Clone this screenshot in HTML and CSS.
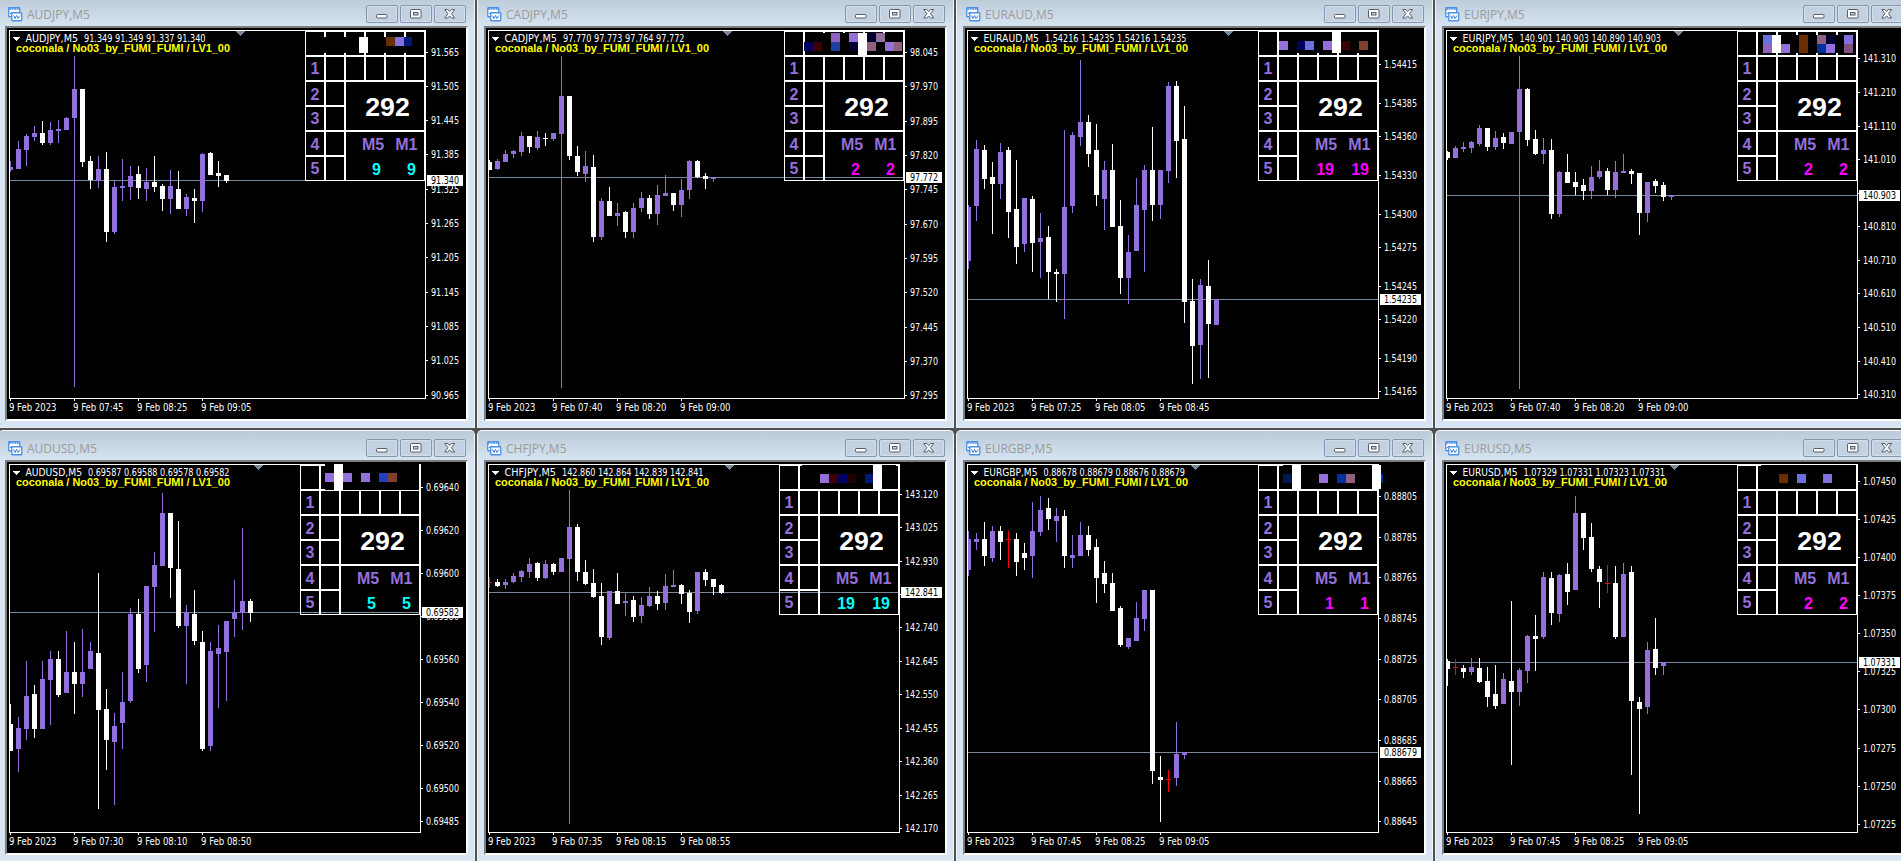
FILE: index.html
```html
<!DOCTYPE html>
<html lang="en">
<head>
  <meta charset="UTF-8">
  <meta name="viewport" content="width=device-width, initial-scale=1.0">
  <title>Charts</title>
  <link rel="stylesheet" href="styles.css">
</head>
<body>
  <main class="workspace" id="workspace"></main>

  <template id="windowTemplate">
    <section class="window">
      <header class="titlebar">
        <svg class="app-icon" width="15" height="15" viewBox="0 0 15 15">
          <rect x="0.75" y="0.75" width="11" height="9" rx="0.5" fill="#fff" stroke="#4a90e8" stroke-width="1.3"/>
          <path d="M1 2h11" stroke="#4a90e8" stroke-width="1.6" stroke-dasharray="2 0.6"/>
          <path d="M2 7l2-2 1 2" fill="none" stroke="#3a7be0"/>
          <rect x="3.75" y="5.75" width="10" height="8" rx="0.5" fill="#fff" stroke="#4a90e8" stroke-width="1.3"/>
          <path d="M5.5 8.5l1.5 3 1.5-3 1.5 3 2-3" fill="none" stroke="#3a7be0"/>
        </svg>
        <span class="title"></span>
        <div class="buttons">
          <span class="btn">
            <svg width="12" height="10" viewBox="0 0 12 10"><rect x="0.5" y="5.5" width="10.5" height="3.5" rx="1" fill="#fdfdfd" stroke="#565d6b"/></svg>
          </span>
          <span class="btn">
            <svg width="12" height="10" viewBox="0 0 12 10"><rect x="0.5" y="0.5" width="10.5" height="8.5" rx="1" fill="#fdfdfd" stroke="#565d6b"/><rect x="3.5" y="3.5" width="4.5" height="2.5" fill="#c3cfdd" stroke="#565d6b"/></svg>
          </span>
          <span class="btn">
            <svg width="12" height="10" viewBox="0 0 12 10"><path d="M0.8 0.5h3L5.7 2.6 7.6 0.5h3L7.5 4.7 10.6 9h-3L5.7 6.9 3.8 9h-3L3.9 4.7z" fill="#fdfdfd" stroke="#565d6b" stroke-linejoin="round"/></svg>
          </span>
        </div>
      </header>
      <div class="client">
        <svg class="chart" width="459" height="391" viewBox="7 28 459 391"></svg>
        <div class="panel">
          <i class="cell"></i><i class="cell"></i><i class="cell"></i><i class="cell"></i><i class="cell"></i><i class="cell"></i>
          <b class="cell">1</b><i class="cell"></i><i class="cell"></i><i class="cell"></i><i class="cell"></i><i class="cell"></i>
          <b class="cell low">2</b><i class="cell"></i>
          <div class="cell total">292</div>
          <b class="cell">3</b><i class="cell"></i>
          <b class="cell low">4</b><i class="cell"></i>
          <div class="cell frames">
            <div class="names"><span>M5</span><span>M1</span></div>
            <div class="values"><span></span><span></span></div>
          </div>
          <b class="cell">5</b><i class="cell"></i>
        </div>
        <svg class="strip" width="459" height="391" viewBox="7 28 459 391"></svg>
      </div>
    </section>
  </template>

  <script src="script.js"></script>
</body>
</html>
```
FILE: styles.css
```css
* {
  margin: 0;
  padding: 0;
  box-sizing: border-box;
}

body {
  height: 100vh;
  background: #505050;
  overflow: hidden;
  font-family: "Liberation Sans", Arial, sans-serif;
}

/* Tiled chart windows, the outer edges run off the screen */
.workspace {
  display: grid;
  grid-template-columns: repeat(4, 477px);
  grid-template-rows: 432px 431px;
  gap: 2px;
  width: 1903px;
  height: 865px;
  margin: -4px 0 0 -2px;
  overflow: hidden;
}

.window {
  padding: 0 6px;
  border: 1px solid #f3f7fb;
  border-bottom-color: #e4ebf3;
  border-radius: 5px 5px 0 0;
  background: linear-gradient(#bccad8, #d7e4f1 30px);
}

/* Title bar */
.titlebar {
  display: flex;
  align-items: flex-start;
  height: 29px;
  padding: 8px 0 0 3px;
}

.app-icon {
  margin-top: 2px;
}

.title {
  margin: 1px 0 0 4px;
  font: 12px/17px "Open Sans", "Noto Sans", sans-serif;
  color: #9b9b9b;
}

.buttons {
  display: flex;
  gap: 2px;
  margin-left: auto;
  padding-right: 2px;
}

.btn {
  display: flex;
  justify-content: center;
  align-items: center;
  width: 32px;
  height: 18px;
  border: 1px solid #8696b0;
  border-radius: 2px;
  box-shadow: inset 0 0 0 1px #d3deeb;
  background: #c3d1e0;
}

/* Chart area */
.client {
  position: relative;
  width: 463px;
  height: 395px;
  border: 2px solid;
  border-color: #7d7d7d #fff #fff #7d7d7d;
  background: #000;
}

.chart,
.strip {
  display: block;
  shape-rendering: crispEdges;
}

.strip {
  position: absolute;
  top: 0;
  left: 0;
}

.chart text {
  font-family: "DejaVu Sans Condensed", "DejaVu Sans", sans-serif;
  font-size: 9.6px;
  fill: #fff;
}

.chart .dark {
  fill: #000;
}

.chart .signature {
  font: bold 11px "Liberation Sans", Arial, sans-serif;
  fill: #ff0;
}

.frame,
.tick {
  fill: #fff;
}

.price-line,
.shift {
  fill: #778899;
}

.up {
  fill: #9370db;
}

.down {
  fill: #fff;
}

.flat {
  fill: #f00;
}

/* Indicator table */
.panel {
  position: absolute;
  top: 3px;
  right: 41px;
  display: grid;
  grid-template-columns: repeat(6, 20px);
  grid-template-rows: repeat(6, 25px);
  color: #9370db;
  font-size: 16px;
  font-weight: bold;
}

.panel.wide {
  right: 46px;
}

.cell {
  border: 1px solid #fff;
  line-height: 23px;
  text-align: center;
}

.cell.low {
  line-height: 25px;
}

.total,
.frames {
  grid-column: span 4;
  grid-row: span 2;
}

.total {
  padding-left: 5px;
  font-size: 26.67px;
  line-height: 51px;
  color: #fff;
}

.names,
.values {
  display: flex;
  height: 25px;
  line-height: 25px;
}

.names {
  gap: 11px;
  padding-left: 16px;
}

.values span {
  width: 35px;
  text-align: right;
}

.values {
  color: #f0f;
}

.values.cyan {
  color: #0ff;
}
```
FILE: script.js
```js
// candle: [kind, high, body top, body bottom, low]
const charts = [
  {
    symbol: 'AUDJPY', ohlc: '91.349 91.349 91.337 91.340', nameWidth: 52.5, axis: 425, shift: 240,
    price: ['91.340', 180], value: 9, cyan: true,
    times: ['9 Feb 2023', '9 Feb 07:45', '9 Feb 08:25', '9 Feb 09:05'],
    scale: [['91.565', 52], ['91.505', 86], ['91.445', 120], ['91.385', 154], ['91.325', 189], ['91.265', 223], ['91.205', 257], ['91.145', 292], ['91.085', 326], ['91.025', 360], ['90.965', 395]],
    strip: [['#000', 306, 37, 118, 16], ['#fff', 359, 37, 9, 16], ['#6b2e00', 386, 37, 9, 9], ['#8470dc', 395, 37, 9, 9], ['#001878', 404, 37, 8, 9]],
    candles: [
      ['up', 161, 167, 170, 172], ['up', 141, 149, 169, 169], ['up', 134, 136, 150, 166], ['up', 126, 133, 137, 141],
      ['down', 121, 133, 143, 145], ['up', 122, 130, 143, 145], ['up', 120, 129, 131, 143], ['up', 117, 118, 130, 130],
      ['up', 56, 89, 118, 387], ['down', 89, 89, 162, 167], ['down', 156, 161, 180, 189], ['up', 156, 169, 181, 188],
      ['down', 152, 169, 232, 242], ['up', 181, 187, 232, 234], ['up', 159, 186, 188, 201], ['up', 166, 176, 187, 200],
      ['down', 166, 174, 188, 199], ['up', 168, 182, 189, 201], ['down', 156, 182, 187, 192], ['down', 184, 186, 199, 211],
      ['up', 170, 186, 199, 214], ['down', 171, 189, 209, 209], ['up', 194, 197, 209, 216], ['down', 189, 198, 201, 223],
      ['up', 153, 154, 201, 212], ['down', 152, 153, 175, 175], ['down', 161, 173, 176, 187], ['down', 175, 175, 181, 183]
    ]
  },
  {
    symbol: 'CADJPY', ohlc: '97.770 97.773 97.764 97.772', nameWidth: 52.5, axis: 425, shift: 248,
    price: ['97.772', 177], value: 2,
    times: ['9 Feb 2023', '9 Feb 07:40', '9 Feb 08:20', '9 Feb 09:00'],
    scale: [['98.045', 52], ['97.970', 86], ['97.895', 121], ['97.820', 155], ['97.745', 189], ['97.670', 224], ['97.595', 258], ['97.520', 292], ['97.445', 327], ['97.370', 361], ['97.295', 395]],
    strip: [['#000', 326, 33, 98, 22], ['#9060c0', 352, 33, 9, 9], ['#9370db', 370, 33, 9, 9], ['#000030', 388, 33, 9, 9], ['#90709c', 397, 33, 9, 9], ['#000060', 325, 42, 9, 9], ['#3c0000', 334, 42, 9, 9], ['#2040a0', 352, 42, 9, 9], ['#000030', 370, 42, 9, 9], ['#906080', 388, 42, 9, 9], ['#9370db', 406, 42, 9, 9], ['#906080', 415, 42, 8, 9], ['#fff', 379, 33, 9, 23]],
    candles: [
      ['down', 160, 162, 170, 170], ['up', 159, 161, 169, 170], ['up', 150, 154, 162, 162], ['up', 150, 151, 154, 158],
      ['up', 132, 136, 152, 156], ['down', 136, 136, 147, 153], ['up', 131, 137, 148, 150], ['down', 133, 138, 139, 146],
      ['up', 133, 133, 139, 141], ['up', 56, 96, 134, 388], ['down', 96, 96, 156, 160], ['down', 146, 156, 172, 176],
      ['up', 151, 166, 174, 182], ['down', 155, 167, 237, 242], ['up', 198, 201, 237, 240], ['down', 187, 201, 216, 216],
      ['up', 203, 213, 216, 226], ['down', 211, 212, 232, 238], ['up', 203, 208, 232, 238], ['up', 192, 198, 208, 212],
      ['down', 195, 198, 214, 219], ['up', 185, 195, 214, 225], ['up', 175, 193, 196, 196], ['down', 193, 193, 205, 211],
      ['up', 179, 190, 205, 217], ['up', 160, 161, 190, 199], ['down', 160, 161, 177, 178], ['down', 173, 176, 179, 189],
      ['up', 177, 177, 179, 182]
    ]
  },
  {
    symbol: 'EURAUD', ohlc: '1.54216 1.54235 1.54216 1.54235', nameWidth: 55.5, axis: 420, shift: 270,
    price: ['1.54235', 299], value: 19,
    times: ['9 Feb 2023', '9 Feb 07:25', '9 Feb 08:05', '9 Feb 08:45'],
    scale: [['1.54415', 64], ['1.54385', 103], ['1.54360', 136], ['1.54330', 175], ['1.54300', 214], ['1.54275', 247], ['1.54245', 286], ['1.54220', 319], ['1.54190', 358], ['1.54165', 391]],
    strip: [['#000', 321, 32, 98, 21], ['#9370db', 321, 41, 9, 9], ['#000060', 339, 41, 8, 9], ['#6a70dc', 347, 41, 9, 9], ['#9370db', 365, 41, 9, 9], ['#fff', 374, 32, 9, 21], ['#3c0000', 383, 41, 9, 9], ['#804030', 401, 41, 9, 9]],
    candles: [
      ['up', 205, 207, 261, 269], ['up', 140, 149, 206, 221], ['down', 145, 150, 179, 189], ['down', 162, 177, 184, 234],
      ['up', 143, 152, 184, 199], ['down', 147, 150, 212, 238], ['down', 160, 209, 247, 264], ['up', 198, 198, 244, 252],
      ['down', 196, 199, 243, 272], ['up', 213, 238, 242, 278], ['down', 226, 237, 272, 299], ['down', 269, 272, 274, 302],
      ['up', 130, 207, 274, 319], ['up', 132, 135, 206, 213], ['up', 60, 122, 137, 146], ['down', 115, 122, 154, 167],
      ['down', 124, 150, 195, 206], ['up', 161, 170, 199, 230], ['down', 144, 170, 227, 227], ['down', 200, 226, 278, 294],
      ['up', 235, 252, 278, 304], ['up', 178, 205, 251, 251], ['up', 165, 170, 210, 272], ['down', 127, 170, 205, 221],
      ['up', 170, 170, 205, 219], ['up', 82, 86, 171, 183], ['down', 81, 86, 141, 178], ['down', 106, 139, 302, 323],
      ['down', 279, 301, 346, 384], ['up', 279, 285, 345, 379], ['down', 260, 286, 324, 378], ['up', 299, 299, 325, 325]
    ]
  },
  {
    symbol: 'EURJPY', ohlc: '140.901 140.903 140.890 140.903', nameWidth: 51, axis: 420, shift: 241,
    price: ['140.903', 195], value: 2,
    times: ['9 Feb 2023', '9 Feb 07:40', '9 Feb 08:20', '9 Feb 09:00'],
    scale: [['141.310', 58], ['141.210', 92], ['141.110', 126], ['141.010', 159], ['', 193], ['140.810', 226], ['140.710', 260], ['140.610', 293], ['140.510', 327], ['140.410', 361], ['140.310', 394]],
    strip: [['#000', 326, 35, 90, 18], ['#6a70dc', 326, 35, 9, 9], ['#9060c0', 326, 44, 9, 9], ['#fff', 335, 35, 9, 18], ['#9370db', 344, 44, 9, 9], ['#6b2e00', 362, 35, 9, 18], ['#906080', 380, 35, 9, 9], ['#000030', 389, 35, 9, 9], ['#0030a0', 380, 44, 9, 9], ['#9370db', 389, 44, 9, 9], ['#8470dc', 407, 35, 9, 9], ['#805080', 407, 44, 9, 9]],
    candles: [
      ['down', 151, 152, 158, 160], ['up', 146, 148, 158, 158], ['up', 142, 147, 149, 152], ['up', 141, 142, 148, 153],
      ['up', 125, 128, 144, 146], ['down', 128, 128, 147, 151], ['up', 131, 138, 147, 150], ['down', 133, 137, 143, 149],
      ['up', 132, 132, 144, 144], ['up', 56, 89, 132, 389], ['down', 88, 89, 140, 146], ['down', 130, 139, 154, 155],
      ['up', 138, 150, 154, 164], ['down', 139, 150, 214, 219], ['up', 171, 172, 214, 217], ['down', 154, 172, 183, 183],
      ['down', 172, 182, 187, 195], ['down', 179, 185, 191, 200], ['up', 166, 177, 191, 199], ['up', 160, 171, 177, 179],
      ['down', 168, 171, 190, 195], ['up', 161, 172, 190, 198], ['up', 154, 171, 173, 173], ['down', 169, 171, 174, 184],
      ['down', 173, 173, 213, 235], ['up', 182, 182, 213, 222], ['down', 179, 181, 186, 193], ['down', 182, 185, 197, 201],
      ['up', 195, 195, 197, 200]
    ]
  },
  {
    symbol: 'AUDUSD', ohlc: '0.69587 0.69588 0.69578 0.69582', nameWidth: 56.5, axis: 420, shift: 258,
    price: ['0.69582', 178], value: 5, cyan: true,
    times: ['9 Feb 2023', '9 Feb 07:30', '9 Feb 08:10', '9 Feb 08:50'],
    scale: [['0.69640', 53], ['0.69620', 96], ['0.69600', 139], ['0.69580', 182], ['0.69560', 225], ['0.69540', 268], ['0.69520', 311], ['0.69500', 354], ['0.69485', 387]],
    strip: [['#000', 325, 30, 94, 26], ['#9370db', 325, 39, 9, 9], ['#fff', 334, 30, 9, 26], ['#9370db', 343, 39, 9, 9], ['#9370db', 361, 39, 9, 9], ['#2040c0', 379, 39, 9, 9], ['#804030', 388, 39, 9, 9]],
    candles: [
      ['down', 270, 290, 317, 317], ['up', 283, 294, 315, 338], ['up', 227, 262, 295, 306], ['down', 251, 260, 295, 304],
      ['up', 227, 245, 295, 295], ['up', 217, 225, 246, 291], ['down', 217, 225, 261, 263], ['up', 197, 238, 259, 259],
      ['down', 208, 238, 250, 280], ['up', 195, 238, 250, 263], ['up', 208, 217, 235, 235], ['down', 139, 219, 276, 375],
      ['down', 255, 275, 306, 336], ['up', 279, 292, 308, 371], ['up', 238, 268, 289, 315], ['up', 174, 180, 267, 269],
      ['down', 165, 180, 235, 239], ['up', 152, 152, 231, 248], ['up', 118, 131, 153, 198], ['up', 59, 79, 132, 132],
      ['down', 79, 79, 134, 164], ['down', 87, 135, 192, 194], ['up', 171, 178, 192, 250], ['down', 156, 180, 207, 211],
      ['down', 197, 208, 315, 317], ['up', 208, 217, 312, 317], ['up', 191, 214, 220, 274], ['up', 187, 187, 218, 267],
      ['up', 146, 178, 185, 203], ['up', 94, 167, 179, 196], ['down', 165, 167, 179, 188]
    ]
  },
  {
    symbol: 'CHFJPY', ohlc: '142.860 142.864 142.839 142.841', nameWidth: 51.5, axis: 420, shift: 250,
    price: ['142.841', 158], value: 19, cyan: true,
    times: ['9 Feb 2023', '9 Feb 07:35', '9 Feb 08:15', '9 Feb 08:55'],
    scale: [['143.120', 60], ['143.025', 93], ['142.930', 127], ['', 160], ['142.740', 193], ['142.645', 227], ['142.550', 260], ['142.455', 294], ['142.360', 327], ['142.265', 361], ['142.170', 394]],
    strip: [['#000', 323, 31, 94, 24], ['#9370db', 341, 40, 9, 9], ['#3c0000', 350, 40, 9, 9], ['#000060', 359, 40, 9, 9], ['#200000', 368, 40, 9, 9], ['#001878', 386, 40, 8, 9], ['#fff', 394, 31, 9, 25]],
    candles: [
      ['flat', 143, 148, 149, 154], ['down', 145, 148, 152, 153], ['up', 145, 148, 151, 155], ['up', 139, 142, 148, 149],
      ['up', 136, 137, 143, 148], ['up', 124, 130, 138, 144], ['down', 128, 129, 144, 147], ['up', 126, 130, 144, 145],
      ['down', 129, 130, 138, 141], ['up', 124, 124, 138, 138], ['up', 56, 93, 125, 390], ['down', 90, 93, 138, 147],
      ['down', 126, 138, 150, 151], ['down', 135, 149, 163, 164], ['down', 149, 162, 203, 211], ['up', 157, 157, 204, 206],
      ['down', 139, 157, 170, 170], ['up', 159, 167, 169, 182], ['down', 162, 166, 183, 188], ['up', 163, 171, 182, 189],
      ['up', 153, 162, 172, 173], ['down', 157, 162, 170, 176], ['up', 140, 152, 169, 176], ['up', 136, 151, 153, 153],
      ['down', 150, 151, 160, 170], ['down', 156, 159, 178, 189], ['up', 138, 138, 177, 180], ['down', 135, 138, 146, 152],
      ['down', 145, 145, 153, 161], ['down', 150, 151, 159, 160]
    ]
  },
  {
    symbol: 'EURGBP', ohlc: '0.88678 0.88679 0.88676 0.88679', nameWidth: 54, axis: 420, shift: 237,
    price: ['0.88679', 318], value: 1,
    times: ['9 Feb 2023', '9 Feb 07:45', '9 Feb 08:25', '9 Feb 09:05'],
    scale: [['0.88805', 62], ['0.88785', 103], ['0.88765', 143], ['0.88745', 184], ['0.88725', 225], ['0.88705', 265], ['0.88685', 306], ['0.88665', 347], ['0.88645', 387]],
    strip: [['#000', 325, 31, 94, 24], ['#001850', 325, 40, 9, 9], ['#fff', 334, 31, 9, 25], ['#9370db', 361, 40, 9, 9], ['#0030a0', 379, 40, 9, 9], ['#906080', 388, 40, 9, 9], ['#fff', 414, 31, 9, 24], ['#0030a0', 423, 40, 2, 9]],
    candles: [
      ['up', 97, 105, 136, 142], ['up', 99, 105, 108, 116], ['down', 88, 105, 122, 132], ['up', 92, 97, 124, 128],
      ['down', 92, 97, 108, 126], ['flat', 97, 105, 106, 134], ['down', 99, 105, 128, 142], ['down', 109, 119, 124, 136],
      ['up', 68, 97, 122, 144], ['up', 62, 76, 98, 102], ['down', 64, 74, 85, 96], ['up', 74, 82, 87, 108],
      ['down', 76, 82, 122, 134], ['up', 101, 121, 124, 134], ['up', 88, 101, 122, 122], ['down', 92, 101, 116, 122],
      ['down', 105, 113, 144, 169], ['down', 127, 139, 150, 159], ['down', 139, 149, 177, 177], ['down', 172, 174, 211, 213],
      ['up', 204, 204, 213, 215], ['up', 168, 184, 207, 207], ['up', 156, 156, 185, 197], ['down', 156, 156, 337, 350],
      ['down', 322, 343, 346, 388], ['flat', 336, 345, 346, 358], ['up', 288, 320, 344, 352], ['up', 318, 318, 321, 325]
    ]
  },
  {
    symbol: 'EURUSD', ohlc: '1.07329 1.07331 1.07323 1.07331', nameWidth: 55, axis: 420, shift: 237,
    price: ['1.07331', 228], value: 2,
    times: ['9 Feb 2023', '9 Feb 07:45', '9 Feb 08:25', '9 Feb 09:05'],
    scale: [['1.07450', 47], ['1.07425', 85], ['1.07400', 123], ['1.07375', 161], ['1.07350', 199], ['1.07325', 237], ['1.07300', 275], ['1.07275', 314], ['1.07250', 352], ['1.07225', 390]],
    strip: [['#000', 324, 31, 95, 24], ['#6b2e00', 342, 40, 9, 9], ['#6a70dc', 360, 40, 9, 9], ['#8470dc', 386, 40, 9, 9]],
    candles: [
      ['down', 225, 227, 235, 252], ['flat', 225, 233, 234, 241], ['down', 231, 234, 238, 244], ['up', 224, 233, 238, 241],
      ['down', 224, 234, 248, 249], ['down', 233, 247, 263, 273], ['down', 231, 260, 272, 275], ['up', 239, 245, 270, 270],
      ['down', 167, 247, 258, 331], ['up', 234, 236, 258, 272], ['up', 201, 202, 237, 249], ['down', 181, 202, 205, 237],
      ['up', 138, 143, 203, 205], ['down', 138, 144, 179, 191], ['up', 140, 141, 180, 188], ['down', 129, 140, 158, 171],
      ['up', 62, 79, 156, 156], ['down', 79, 79, 104, 116], ['down', 89, 103, 135, 138], ['down', 132, 135, 148, 174],
      ['flat', 131, 149, 150, 159], ['down', 132, 149, 203, 205], ['up', 129, 140, 203, 203], ['down', 132, 138, 267, 341],
      ['down', 263, 268, 275, 380], ['up', 208, 216, 273, 280], ['down', 184, 215, 234, 241], ['up', 228, 228, 232, 241]
    ]
  }
];

const LEFT = 10;
const STEP = 8;

function rect(cls, x, y, w, h) {
  return `<rect class="${cls}" x="${x}" y="${y}" width="${w}" height="${h}"/>`;
}

function text(str, x, y, width, cls = '') {
  return `<text class="${cls}" x="${x}" y="${y}" textLength="${width}" lengthAdjust="spacingAndGlyphs">${str}</text>`;
}

function drawChart(c) {
  const labelWidth = c.price[0].length === 6 ? 28 : 33;
  const priceY = c.price[1];
  let out = '';

  // plot frame
  out += rect('frame', 9, 30, c.axis - 8, 1);
  out += rect('frame', 9, 398, c.axis - 8, 1);
  out += rect('frame', 9, 30, 1, 369);
  out += rect('frame', c.axis, 30, 1, 369);
  out += rect('price-line', LEFT, priceY, c.axis - LEFT, 1);

  c.candles.forEach(([kind, high, top, bottom, low], i) => {
    const x = LEFT + i * STEP;
    const bodyX = Math.max(LEFT, x - 2);
    out += rect(kind, x, high, 1, low - high);
    out += rect(kind, bodyX, top, x + 3 - bodyX, bottom - top);
  });

  // price scale, a tick behind the current price has no label
  c.scale.forEach(([label, y]) => {
    out += rect('tick', c.axis + 1, y, 2, 1);
    if (label) out += text(label, c.axis + 6, y + 4, labelWidth);
  });
  out += rect('frame', c.axis + 2, priceY - 5, labelWidth + 8, 11);
  out += text(c.price[0], c.axis + 6, priceY + 4, labelWidth, 'dark');

  // time scale
  c.times.forEach((label, i) => {
    const x = LEFT + i * STEP * 8;
    out += rect('tick', x, 399, 1, 2);
    out += text(label, x - 1, 411, i === 0 ? 47.5 : 50.5);
  });

  // header
  out += `<path class="shift" d="M${c.shift - 4} 31h9l-4.5 5z"/>`;
  out += '<path class="frame" d="M13 37h7l-3.5 4z"/>';
  out += text(`${c.symbol},M5`, 25.5, 42, c.nameWidth);
  out += text(c.ohlc, 31.5 + c.nameWidth, 42, labelWidth * 4 + 9.5);
  out += text('coconala / No03_by_FUMI_FUMI / LV1_00', 16, 52, 214, 'signature');
  return out;
}

const workspace = document.getElementById('workspace');
const template = document.getElementById('windowTemplate');

charts.forEach(c => {
  const win = template.content.cloneNode(true);
  win.querySelector('.title').textContent = `${c.symbol},M5`;
  win.querySelector('.chart').innerHTML = drawChart(c);
  win.querySelector('.strip').innerHTML = c.strip
    .map(([fill, x, y, w, h]) => `<rect fill="${fill}" x="${x}" y="${y}" width="${w}" height="${h}"/>`)
    .join('');
  if (c.axis === 420) win.querySelector('.panel').classList.add('wide');
  const values = win.querySelector('.values');
  if (c.cyan) values.classList.add('cyan');
  values.querySelectorAll('span').forEach(s => { s.textContent = c.value; });
  workspace.appendChild(win);
});
```
